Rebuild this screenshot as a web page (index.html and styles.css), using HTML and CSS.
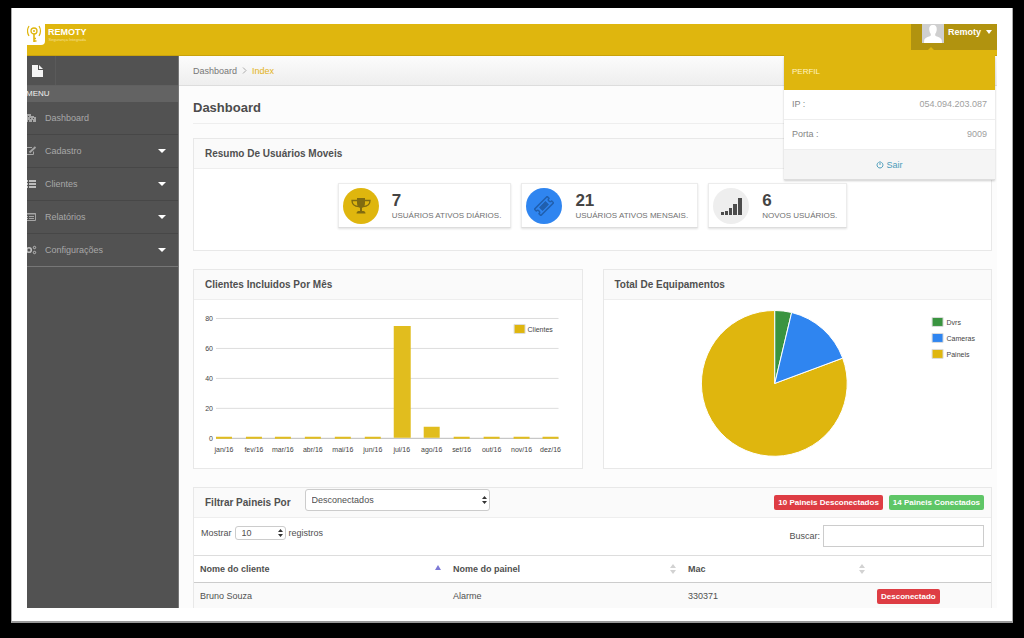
FILE: index.html
```html
<!DOCTYPE html>
<html lang="pt-BR">
<head>
<meta charset="utf-8">
<title>Remoty - Dashboard</title>
<link rel="stylesheet" href="styles.css">
</head>
<body>
<div class="frame">
<div class="app">
  <header class="topbar">
    <a class="brand" href="#">
      <span class="brand-mark">
        <svg width="15" height="18" viewBox="0 0 15 18" fill="none" stroke="#dfb60e"><circle cx="7" cy="6" r="3" stroke-width="1.300"/><circle cx="7" cy="6" r="1" fill="#dfb60e" stroke="none"/><path d="M7 9v8M7 16h2.500M7 13.500h2" stroke-width="1.600"/><path d="M2 1Q-1 6 2 11M12 1Q15 6 12 11" stroke-width="1.200"/></svg>
      </span>
      <span class="brand-text"><b class="brand-name">REMOTY</b><span class="brand-tag">Segurança Integrada</span></span>
    </a>
    <div class="user">
      <button class="user-button" type="button">
        <svg class="avatar" width="22" height="19" viewBox="0 0 22 19"><path fill="#cfcfcf" d="M0 0h22v19H0z"/><path fill="#fff" d="M11 1c3 0 4 2 3.700 5-.2 2-1 3-1.500 4v1.500c1.500 1.500 6 1.500 6.600 5l.2 2.500H2l.2-2.500c.6-3.500 5.100-3.500 6.600-5V10c-.5-1-1.300-2-1.500-4C7 3 8 1 11 1z"/></svg>
        <b>Remoty</b>
        <svg class="caret" width="6" height="4" viewBox="0 0 6 4"><path fill="#fff" d="M0 0h6L3 4z"/></svg>
      </button>
      <div class="profile">
        <svg class="profile-tip" width="8" height="4" viewBox="0 0 8 4"><path fill="#dfb60e" d="M0 4 4 0l4 4z"/></svg>
        <h2 class="profile-title">PERFIL</h2>
        <div class="profile-row"><span>IP :</span><span class="value">054.094.203.087</span></div>
        <div class="profile-row"><span>Porta :</span><span class="value">9009</span></div>
        <a class="profile-exit" href="#"><svg width="8" height="8" viewBox="0 0 8 8" fill="none" stroke="#4b9cba" stroke-linecap="round"><path d="M2.300 1.500a3 3 0 1 0 3.400 0M4 .5v3"/></svg>Sair</a>
      </div>
    </div>
  </header>
  <div class="layout">
    <nav class="sidebar">
      <div class="shortcuts"><button type="button" aria-label="Novo"><svg width="11" height="12" viewBox="0 0 11 12"><path fill="#f4f4f4" d="M0 0h6v5h5v7H0z"/><path fill="#f4f4f4" d="M7 0l4 4H7z"/></svg></button></div>
      <h2 class="menu-title">MENU</h2>
      <ul class="menu">
        <li><a href="#"><svg width="12" height="10" viewBox="0 0 12 10" fill="#a5a5a5"><path d="M1 1h5v2h3v1h2v5H8V7H7v2H4V7H3v2H1z"/><path fill="#525252" d="M3 3h1v1H3zM5 5h1v1H5zM8 5h1v1H8z"/></svg><span>Dashboard</span></a></li>
        <li><a href="#"><svg width="12" height="10" viewBox="0 0 12 10" fill="none" stroke="#a5a5a5"><path d="M7 1.500H1.500v7h7V5.500"/><path d="M4.500 6.500l6-5.500" stroke-width="1.800"/></svg><span>Cadastro</span><svg class="arrow" width="8" height="4" viewBox="0 0 8 4"><path fill="#fff" d="M0 0h8L4 4z"/></svg></a></li>
        <li><a href="#"><svg width="12" height="10" viewBox="0 0 12 10" fill="#bdbdbd"><path d="M0 1h3v2H0zM4 1h7v2H4zM0 4h3v2H0zM4 4h7v2H4zM0 7h3v2H0zM4 7h7v2H4z"/></svg><span>Clientes</span><svg class="arrow" width="8" height="4" viewBox="0 0 8 4"><path fill="#fff" d="M0 0h8L4 4z"/></svg></a></li>
        <li><a href="#"><svg width="12" height="10" viewBox="0 0 12 10" fill="none" stroke="#a5a5a5"><path d="M.5 1.500h10v7H.5zM0 2h11M2 4.500h1M4 4.500h5M2 6.500h1M4 6.500h5"/></svg><span>Relatórios</span><svg class="arrow" width="8" height="4" viewBox="0 0 8 4"><path fill="#fff" d="M0 0h8L4 4z"/></svg></a></li>
        <li><a href="#"><svg width="12" height="10" viewBox="0 0 12 10" fill="none" stroke="#bdbdbd"><circle cx="4" cy="5" r="2.300" stroke-width="1.600"/><circle cx="9.500" cy="2.500" r="1.200"/><circle cx="9.500" cy="7.500" r="1.200"/></svg><span>Configurações</span><svg class="arrow" width="8" height="4" viewBox="0 0 8 4"><path fill="#fff" d="M0 0h8L4 4z"/></svg></a></li>
      </ul>
    </nav>
    <main class="main">
      <div class="breadcrumb"><a href="#">Dashboard</a><svg width="5" height="7" viewBox="0 0 5 7" fill="none" stroke="#aaa"><path d="M1 .5l3 3-3 3"/></svg><a class="current" href="#">Index</a></div>
      <div class="content">
        <h1 class="page-title">Dashboard</h1>
        <section class="panel summary">
          <h2 class="panel-title">Resumo De Usuários Moveis</h2>
          <div class="stats">
            <div class="stat">
              <span class="disc gold"><svg width="20" height="20" viewBox="0 0 20 20"><path fill="#806b10" d="M6 2h8v5c0 3-1.500 4-3 5v3h1.500c1 0 2 1 2 2.500h-9C5.500 16 6.500 15 7.500 15H9v-3C7.500 11 6 10 6 7z"/><path fill="none" stroke="#806b10" stroke-width="1.300" d="M6 4.500H1C1 8 3.500 10.500 8 10.500M14 4.500h5c0 3.500-2.500 6-7 6"/></svg></span>
              <div class="stat-text"><strong>7</strong><span>USUÁRIOS ATIVOS DIÁRIOS.</span></div>
            </div>
            <div class="stat">
              <span class="disc blue"><svg width="20" height="20" viewBox="0 0 20 20"><g transform="rotate(-45 10 10)" fill="none" stroke="#205fae"><path stroke-width="1.500" d="M1 5.500h18v2.500a2 2 0 0 0 0 4v2.500H1V12a2 2 0 0 0 0-4z"/><path fill="#205fae" d="M6 8h8v4H6z"/></g></svg></span>
              <div class="stat-text"><strong>21</strong><span>USUÁRIOS ATIVOS MENSAIS.</span></div>
            </div>
            <div class="stat">
              <span class="disc grey"><svg width="22" height="18" viewBox="0 0 22 18" fill="#4c4c4c"><path d="M1 15h3v3H1zM5 14h3v4H5zM9 11h3v7H9zM13 7h4v11h-4zM18 1h4v17h-4z"/></svg></span>
              <div class="stat-text"><strong>6</strong><span>NOVOS USUÁRIOS.</span></div>
            </div>
          </div>
        </section>
        <div class="charts">
          <section class="panel">
            <h2 class="panel-title">Clientes Incluidos Por Mês</h2>
            <svg class="chart" viewBox="0 0 388 168" role="img" aria-label="Clientes por mês">
              <path class="grid" d="M22 18.500h343M22 48.500h343M22 78.500h343M22 108.500h343"/>
              <path class="axis" d="M22 138.500h343"/>
              <g fill="#e1bd1e"><path d="M22 137h16v2H22zM52 137h16v2H52zM81 137h16v2H81zM111 137h16v2h-16zM141 137h16v2h-16zM171 137h16v2h-16zM200 26h17v112h-17zM230 127h16v11h-16zM260 137h16v2h-16zM290 137h16v2h-16zM320 137h16v2h-16zM349 137h16v2h-16z"/></g>
              <g class="y-labels"><text x="19" y="21">80</text><text x="19" y="51">60</text><text x="19" y="81">40</text><text x="19" y="111">20</text><text x="19" y="141">0</text></g>
              <g class="x-labels"><text x="30" y="152">jan/16</text><text x="60" y="152">fev/16</text><text x="89" y="152">mar/16</text><text x="119" y="152">abr/16</text><text x="149" y="152">mai/16</text><text x="179" y="152">jun/16</text><text x="208" y="152">jul/16</text><text x="238" y="152">ago/16</text><text x="268" y="152">set/16</text><text x="298" y="152">out/16</text><text x="328" y="152">nov/16</text><text x="357" y="152">dez/16</text></g>
              <path fill="#dfb60e" stroke="#ddd" d="M320.500 24.500h11v9h-11z"/><text x="334" y="32">Clientes</text>
            </svg>
          </section>
          <section class="panel">
            <h2 class="panel-title">Total De Equipamentos</h2>
            <svg class="chart" viewBox="0 0 388 168" role="img" aria-label="Total de equipamentos">
              <g stroke="#fff" stroke-width="1">
                <path fill="#dfb60e" d="M171 83.500 239 58.200A73 73 0 1 1 171 10.500z"/>
                <path fill="#3a9440" d="M171 83.500V10.500a73 73 0 0 1 16.900 2z"/>
                <path fill="#2f85f0" d="M171 83.500 187.900 12.500A73 73 0 0 1 239 58.200z"/>
              </g>
              <g stroke="#ddd"><path fill="#3a9440" d="M328.500 17.500h11v9h-11z"/><path fill="#2f85f0" d="M328.500 33.500h11v9h-11z"/><path fill="#dfb60e" d="M328.500 49.500h11v9h-11z"/></g>
              <text x="343" y="25">Dvrs</text><text x="343" y="41">Cameras</text><text x="343" y="57">Paineis</text>
            </svg>
          </section>
        </div>
        <section class="panel">
          <div class="panel-title filter">
            <label for="filtro">Filtrar Paineis Por</label>
            <span class="select wide"><select id="filtro"><option>Desconectados</option><option>Conectados</option></select><svg width="5" height="8" viewBox="0 0 5 8"><path fill="#333" d="M0 3h5L2.500 0zM0 5h5L2.500 8z"/></svg></span>
            <span class="badge red push">10 Paineis Desconectados</span>
            <span class="badge green">14 Paineis Conectados</span>
          </div>
          <div class="tools">
            <label class="length" for="quantidade">Mostrar
              <span class="select"><select id="quantidade"><option>10</option><option>25</option></select><svg width="5" height="8" viewBox="0 0 5 8"><path fill="#333" d="M0 3h5L2.500 0zM0 5h5L2.500 8z"/></svg></span>
            registros</label>
            <label class="search" for="buscar">Buscar:<input id="buscar" type="text"></label>
          </div>
          <table class="grid-table">
            <colgroup><col class="c1"><col class="c2"><col class="c3"><col></colgroup>
            <thead><tr>
              <th><div>Nome do cliente<svg class="sorted" width="6" height="5" viewBox="0 0 6 5"><path fill="#7d79d6" d="M0 5h6L3 0z"/></svg></div></th>
              <th><div>Nome do painel<svg width="6" height="10" viewBox="0 0 6 10"><path fill="#d2d2d2" d="M0 4h6L3 0zM0 6h6l-3 4z"/></svg></div></th>
              <th><div>Mac<svg width="6" height="10" viewBox="0 0 6 10"><path fill="#d2d2d2" d="M0 4h6L3 0zM0 6h6l-3 4z"/></svg></div></th>
              <th></th>
            </tr></thead>
            <tbody><tr><td>Bruno Souza</td><td>Alarme</td><td>330371</td><td><span class="badge red">Desconectado</span></td></tr></tbody>
          </table>
        </section>
      </div>
    </main>
  </div>
</div>
</div>
</body>
</html>
```
FILE: styles.css
```css
* { box-sizing: border-box; }
body {
  margin: 0;
  height: 100vh;
  padding: 8px 11px 15px;
  display: flex;
  background: #000;
  color: #505050;
  font: 9px/14px "Liberation Sans", Arial, sans-serif;
}
h1, h2, ul { margin: 0; padding: 0; }
a { color: inherit; text-decoration: none; }
button, input, select { font: inherit; color: inherit; margin: 0; }
button { border: 0; padding: 0; background: none; }
svg { display: block; flex: none; }

.frame {
  flex: 1;
  min-width: 0;
  padding: 16px 15px 13px;
  background: #fff;
  border: solid #aaa;
  border-width: 0 1px 2px;
  border-bottom-color: #999;
  display: flex;
}
.app { flex: 1; min-width: 0; display: flex; flex-direction: column; overflow: hidden; }

.topbar {
  position: relative;
  z-index: 1;
  flex: none;
  height: 32px;
  display: flex;
  justify-content: space-between;
  align-items: flex-start;
  background: #dfb60e;
  border-bottom: 1px solid #c9a20c;
}
.brand { display: flex; gap: 3px; color: #fff; }
.brand-mark { width: 18px; height: 21px; padding-top: 1px; background: #fff; border-radius: 0 0 4px 0; }
.brand-text { display: flex; flex-direction: column; align-items: center; padding-top: 3px; }
.brand-name { font-size: 9px; line-height: 11px; }
.brand-tag { font-size: 4px; line-height: 4px; color: #f4e09a; }

.user-button {
  display: flex;
  align-items: flex-start;
  gap: 4px;
  height: 26px;
  padding: 0 5px 0 11px;
  background: #b1930f;
  color: #fff;
  line-height: 17px;
}
.caret { margin: 6px 0 0 1px; }

.profile {
  position: absolute;
  top: 32px;
  right: 2px;
  width: 211px;
  background: #fff;
  border-bottom: 1px solid #ddd;
  box-shadow: 0 1px 2px rgba(0, 0, 0, .2);
  color: #858585;
}
.profile-tip { position: absolute; left: 143px; top: -9px; }
.profile-title {
  height: 34px;
  padding: 0 8px;
  background: #dfb60e;
  color: #fff4c4;
  font-size: 8px;
  font-weight: normal;
  line-height: 32px;
  box-shadow: 0 -1px #dfb60e;
}
.profile-row { display: flex; justify-content: space-between; height: 30px; padding: 0 8px; line-height: 29px; border-bottom: 1px solid #eee; }
.value { color: #a0a0a0; }
.profile-exit { display: flex; justify-content: center; align-items: center; gap: 2px; height: 29px; background: #f5f5f5; color: #4b9cba; }

.layout { flex: 1; min-height: 0; display: flex; }
.sidebar { flex: none; width: 152px; background: #525252; color: #a8a8a8; border-right: 1px solid #777; overflow: hidden; }
.shortcuts { height: 30px; display: flex; border-bottom: 1px solid #606060; }
.shortcuts button { width: 29px; padding: 0 5px; border-right: 1px solid #5a5a5a; }
.menu-title { height: 16px; margin-left: -1px; background: #636363; color: #f0f0f0; font-size: 8px; line-height: 16px; font-weight: normal; }
.menu { list-style: none; }
.menu a { display: flex; align-items: center; gap: 8px; height: 33px; margin-left: -2px; padding-right: 12px; border-bottom: 1px solid #474747; }
.menu li:last-child a { border-color: #777; }
.arrow { margin-left: auto; }

.main { flex: 1; min-width: 0; background: #fcfcfc; }
.breadcrumb {
  display: flex;
  align-items: center;
  gap: 5px;
  height: 30px;
  padding: 0 14px;
  background: linear-gradient(#fcfcfc, #eee);
  border-bottom: 1px solid #ddd;
  color: #777;
}
.current { color: #e3b321; }
.content { padding: 0 5px 0 14px; display: flex; flex-direction: column; gap: 18px; }
.page-title { height: 38px; margin-bottom: -4px; font-size: 13px; line-height: 43px; border-bottom: 1px solid #eee; color: #4c4c4c; }
.panel { min-width: 0; background: #fff; border: 1px solid #e8e8e8; }
.panel-title {
  height: 30px;
  padding: 0 11px;
  background: #fafafa;
  border-bottom: 1px solid #eee;
  font-size: 10px;
  line-height: 29px;
  font-weight: bold;
  color: #505050;
}
.stats { display: flex; justify-content: center; gap: 10px; padding: 14px 0 22px; }
.stat {
  display: flex;
  align-items: center;
  gap: 13px;
  height: 45px;
  padding: 0 9px 0 4px;
  background: #fff;
  border: 1px solid #ececec;
  border-bottom-color: #ddd;
  box-shadow: 0 1px 2px rgba(0, 0, 0, .12);
}
.disc { display: flex; align-items: center; justify-content: center; width: 36px; height: 36px; border-radius: 50%; }
.gold { background: #dfb60e; }
.blue { background: #2f85f0; }
.grey { background: #eee; }
.stat-text { display: flex; flex-direction: column; font-size: 8px; line-height: 11px; color: #707070; }
.stat-text strong { font-size: 17px; line-height: 19px; color: #444; }

.charts { display: grid; grid-template-columns: 1fr 1fr; gap: 20px; }
.chart { width: 100%; height: auto; font-size: 7px; fill: #444; }
.grid { stroke: #ddd; }
.axis { stroke: #bbb; }
.y-labels { text-anchor: end; }
.x-labels { text-anchor: middle; }

.filter { display: flex; align-items: center; gap: 6px; padding-right: 7px; }
.select { position: relative; display: inline-block; font-weight: normal; font-size: 9px; line-height: 12px; }
.select select {
  appearance: none;
  width: 51px;
  height: 14px;
  padding: 0 6px;
  border: 1px solid #ccc;
  border-radius: 3px;
  background: #fff;
}
.select svg { position: absolute; right: 3px; top: 50%; margin-top: -4px; }
.wide { margin: 0 0 5px 8px; }
.wide select { display: block; width: 185px; height: 22px; }
.push { margin-left: auto; }
.badge { padding: 0 4px; border-radius: 2px; color: #fff; font-size: 8px; font-weight: bold; line-height: 15px; }
.red { background: #de3d44; }
.green { background: #5fc667; }
.tools { display: flex; justify-content: space-between; height: 37px; padding: 7px; }
.length { display: flex; align-items: center; gap: 3px; height: 16px; }
.search { display: flex; align-items: center; gap: 3px; height: 22px; }
.search input { width: 161px; height: 22px; padding: 0 6px; border: 1px solid #ccc; background: #fff; }
.grid-table { width: 100%; table-layout: fixed; border-collapse: collapse; }
.c1 { width: 253px; }
.c2 { width: 235px; }
.c3 { width: 189px; }
.grid-table th, .grid-table td { height: 27px; padding: 0 6px; text-align: left; border-top: 1px solid #ddd; }
.grid-table th div { display: flex; justify-content: space-between; align-items: center; }
.grid-table td { background: #fafafa; border-top-color: #ccc; }
.grid-table .badge { display: inline-block; }
.sorted { margin-bottom: 3px; }
```
